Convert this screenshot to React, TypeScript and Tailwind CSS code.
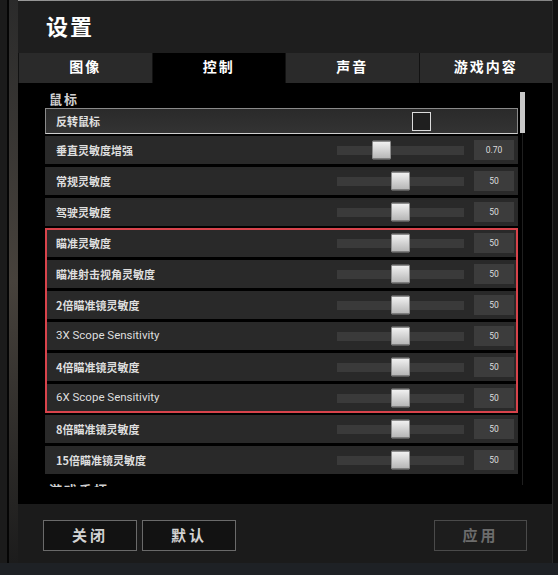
import React from "react";

type Row = { label: string; value: string; pos: number; en?: boolean };

const before: Row[] = [
  { label: "垂直灵敏度增强", value: "0.70", pos: 35 },
  { label: "常规灵敏度", value: "50", pos: 54 },
  { label: "驾驶灵敏度", value: "50", pos: 54 },
];
const boxed: Row[] = [
  { label: "瞄准灵敏度", value: "50", pos: 54 },
  { label: "瞄准射击视角灵敏度", value: "50", pos: 54 },
  { label: "2倍瞄准镜灵敏度", value: "50", pos: 54 },
  { label: "3X Scope Sensitivity", value: "50", pos: 54, en: true },
  { label: "4倍瞄准镜灵敏度", value: "50", pos: 54 },
  { label: "6X Scope Sensitivity", value: "50", pos: 54, en: true },
];
const after: Row[] = [
  { label: "8倍瞄准镜灵敏度", value: "50", pos: 54 },
  { label: "15倍瞄准镜灵敏度", value: "50", pos: 54 },
];

function SliderRow({ r, last }: { r: Row; last?: boolean }) {
  return (
    <div
      className={
        "flex h-[28px] items-center bg-[#292929] pl-[11px] pr-[4px] " +
        (last ? "" : "mb-[3px]")
      }
    >
      <div
        className={
          "flex-1 text-[#dedede] " +
          (r.en
            ? "font-['Roboto','Noto_Sans',sans-serif] text-[11.5px] font-normal"
            : "text-[11px] font-bold")
        }
      >
        {r.label}
      </div>
      <div className="relative h-[9px] w-[127px] bg-[#3a3a3a]">
        <div
          className="absolute top-1/2 h-[19px] w-[19px] -translate-y-1/2 rounded-[1px] border border-[#8c8c8c] bg-gradient-to-b from-[#f2f2f2] to-[#b5b5b5]"
          style={{ left: r.pos }}
        />
      </div>
      <div className="ml-[10px] flex h-[20px] w-[40px] items-center justify-center bg-[#3c3c3c] font-['Roboto',sans-serif] text-[8.5px] text-[#dcdcdc]">
        {r.value}
      </div>
    </div>
  );
}

export default function App() {
  return (
    <div className="flex h-[575px] w-[558px] flex-col bg-[#1e2125] font-['Noto_Sans_CJK_SC','Noto_Sans',sans-serif]">
      <div className="flex h-[563px]">
        {/* left frame */}
        <div className="flex w-[18px]">
          <div className="w-[7px] bg-[#1b1b1b]" />
          <div className="w-[2px] bg-[#050505]" />
          <div className="w-[9px] bg-gradient-to-b from-[#2b2b2b] via-[#47423c] to-[#1c1c1c]" />
        </div>

        {/* window */}
        <div className="flex w-[534px] flex-col">
          {/* header */}
          <div className="relative h-[53px] bg-[#1e1e1e]">
            <div className="h-px bg-gradient-to-r from-[#9a9a9a] via-[#555] to-[#888]" />
            <div className="pl-[28px] pt-[9px] text-[22px] font-bold leading-[30px] tracking-[2px] text-white">
              设置
            </div>
          </div>

          {/* tabs */}
          <div className="flex h-[30px] gap-px bg-[#121212] pl-px">
            {["图像", "控制", "声音", "游戏内容"].map((t, i) => (
              <div
                key={t}
                className={
                  "flex flex-1 items-center justify-center pb-[3px] text-[14px] font-bold tracking-[2px] text-white " +
                  (i === 1 ? "bg-black" : "bg-[#2a2a2a]")
                }
              >
                {t}
              </div>
            ))}
          </div>

          {/* content */}
          <div className="flex h-[421px] bg-black pl-[27px]">
            <div className="h-[404px] w-[473px] overflow-hidden">
              <div className="h-[25px] pl-[4px] pt-[8px] text-[13px] font-bold leading-[16px] tracking-[2px] text-[#d0d0d0]">
                鼠标
              </div>
              <div className="mb-[2px] flex h-[26px] items-center border border-[#8a8a8a] border-b-[#cfcfcf] bg-gradient-to-b from-[#2a2a2a] to-[#333] pl-[10px]">
                <div className="flex-1 text-[11px] font-bold text-[#e0e0e0]">反转鼠标</div>
                <div className="mr-[86px] h-[19px] w-[19px] border-[1.5px] border-[#dcdcdc] bg-[#1f1f1f]" />
              </div>
              {before.map((r) => (
                <SliderRow key={r.label} r={r} />
              ))}
              <div className="relative mb-[3px]">
                {boxed.map((r, i) => (
                  <SliderRow key={r.label} r={r} last={i === boxed.length - 1} />
                ))}
                <div className="pointer-events-none absolute -bottom-[1px] -top-[1px] left-0 right-0 border-2 border-[#d8434b]" />
              </div>
              {after.map((r) => (
                <SliderRow key={r.label} r={r} />
              ))}
              <div className="pl-[4px] pt-[5px] text-[13px] font-bold leading-[16px] tracking-[2px] text-[#d0d0d0]">
                游戏手柄
              </div>
            </div>
            <div className="ml-[2px] flex w-[5px] flex-col items-center">
              <div className="mt-[9px] h-[41px] w-[5px] bg-[#c8c8c8]" />
              <div className="mb-[19px] w-px flex-1 bg-[#1f1f1f]" />
            </div>
          </div>

          {/* footer */}
          <div className="flex h-[59px] items-start bg-[#1b1b1b] px-[25px] pt-[16px]">
            <button className="flex h-[31px] w-[94px] items-center justify-center border border-[#6a6a6a] bg-[#121212] text-[15px] font-bold tracking-[3px] text-[#d2d2d2]">
              关闭
            </button>
            <button className="ml-[5px] flex h-[31px] w-[94px] items-center justify-center border border-[#6a6a6a] bg-[#121212] text-[15px] font-bold tracking-[3px] text-[#d2d2d2]">
              默认
            </button>
            <div className="flex-1" />
            <button className="flex h-[31px] w-[93px] items-center justify-center border border-[#4a4a4a] bg-[#1d1d1d] text-[15px] font-bold tracking-[3px] text-[#6c6c6c]">
              应用
            </button>
          </div>
        </div>

        {/* right frame */}
        <div className="flex w-[6px]">
          <div className="w-px bg-[#2a2a2a]" />
          <div className="flex-1 bg-[#121212]" />
        </div>
      </div>
    </div>
  );
}
